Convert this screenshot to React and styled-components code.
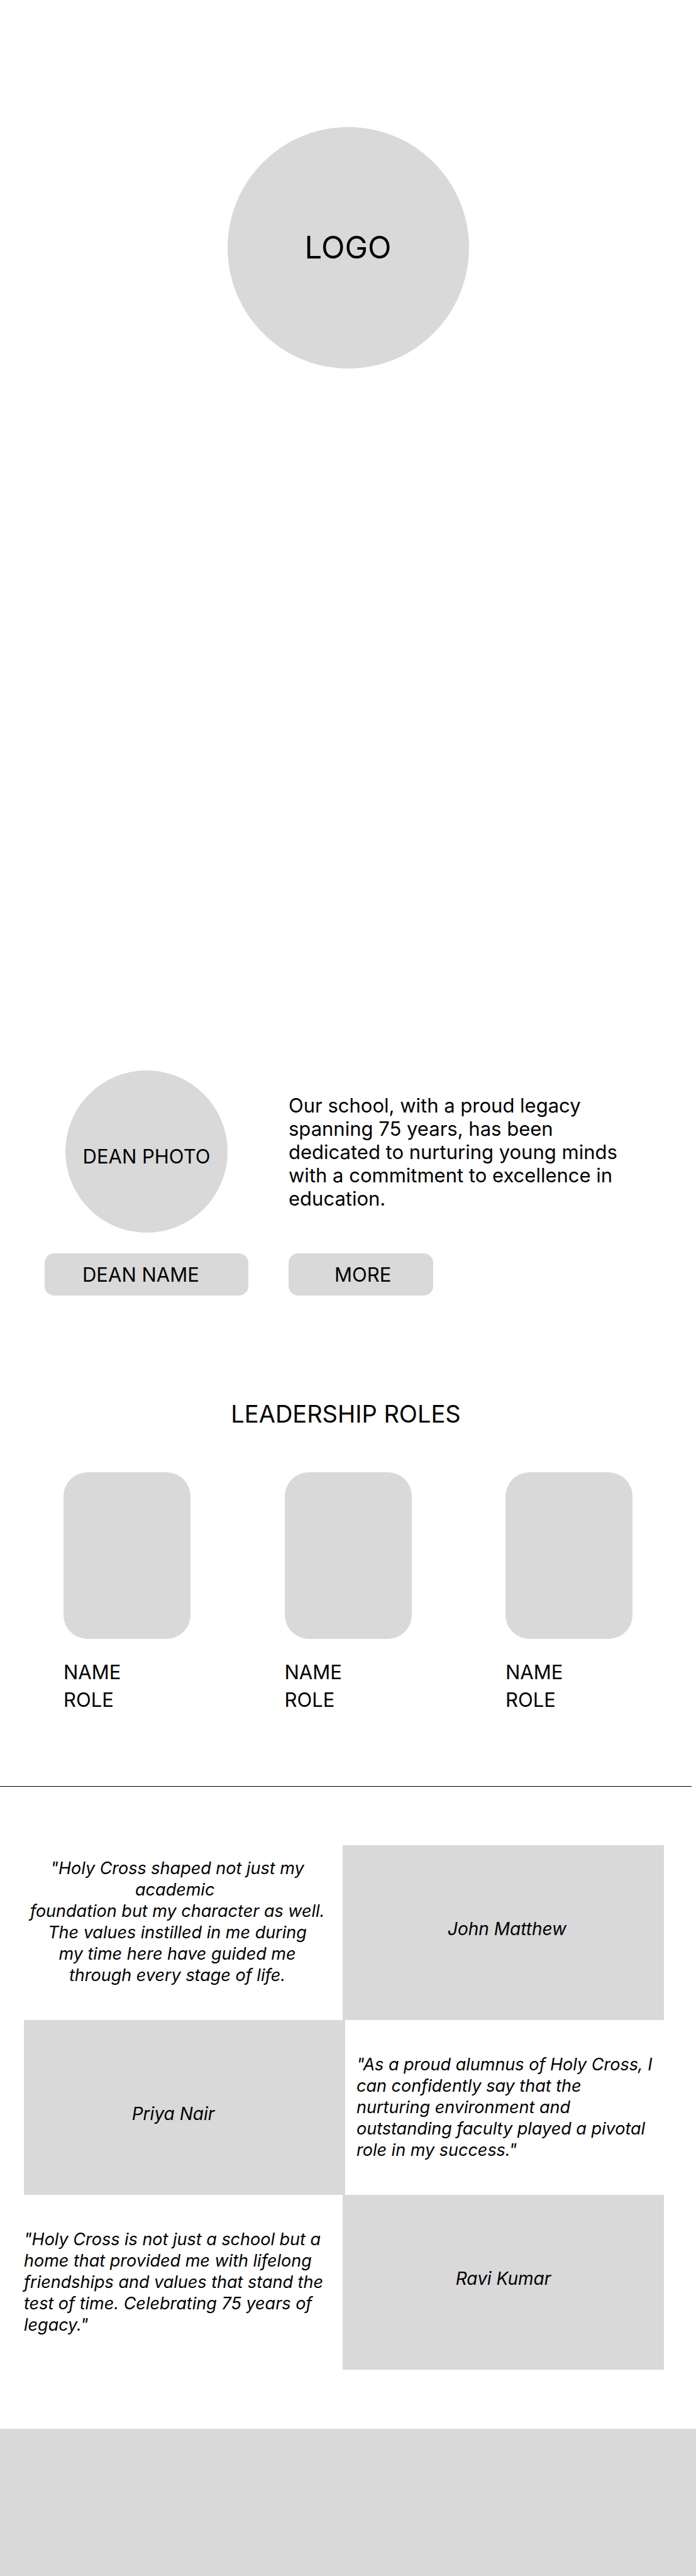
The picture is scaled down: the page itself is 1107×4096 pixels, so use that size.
import React from "react";
import styled, { createGlobalStyle } from "styled-components";

const GlobalStyle = createGlobalStyle`
  *, *::before, *::after { box-sizing: border-box; }
  body {
    margin: 0;
    background: #ffffff;
    color: #000000;
    font-family: Inter, "Liberation Sans", sans-serif;
    font-size: 31px;
    line-height: 37px;
  }
  h1, h2, h3, p, blockquote, figure { margin: 0; font-weight: 400; }
`;

const fill = "#d9d9d9";

const Hero = styled.header`
  display: flex;
  justify-content: center;
  padding: 202px 24px 0;
`;

const Logo = styled.h1`
  display: grid;
  place-items: center;
  width: 384px;
  height: 384px;
  border-radius: 50%;
  background: ${fill};
  font-size: 49px;
  line-height: 60px;
`;

const Dean = styled.section`
  display: grid;
  grid-template-columns: 324px minmax(0, 1fr);
  column-gap: 64px;
  row-gap: 33px;
  align-items: center;
  margin-top: 1116px;
  padding: 0 108px 0 71px;
`;

const DeanPhoto = styled.div`
  display: grid;
  place-items: center;
  justify-self: center;
  width: 258px;
  height: 258px;
  padding-top: 14px;
  border-radius: 50%;
  background: ${fill};
`;

const DeanName = styled.h2`
  padding: 15px 60px;
  border-radius: 15px;
  background: ${fill};
  font-size: 31px;
`;

const MoreButton = styled.button`
  justify-self: start;
  width: 230px;
  padding: 15px 0 15px 73px;
  border: 0;
  border-radius: 15px;
  background: ${fill};
  color: inherit;
  font: inherit;
  text-align: left;
  cursor: pointer;
`;

const Leadership = styled.section`
  margin: 165px 7px 0 0;
  padding-bottom: 115px;
  border-bottom: 1px solid #000000;
`;

const SectionTitle = styled.h2`
  font-size: 38px;
  line-height: 46px;
  text-align: center;
`;

const Leaders = styled.div`
  display: flex;
  justify-content: space-between;
  margin-top: 70px;
  padding: 0 94px 0 101px;
`;

const Leader = styled.article`
  width: 202px;
  line-height: 44px;
`;

const Portrait = styled.div`
  height: 265px;
  margin-bottom: 31px;
  border-radius: 38px;
  background: ${fill};
`;

const LeaderName = styled.h3`
  font-size: 31px;
`;

const Testimonials = styled.section`
  padding: 93px 51px 94px 38px;
  font-size: 28px;
  font-style: italic;
  line-height: 34px;
`;

const Testimonial = styled.figure`
  display: flex;
  flex-direction: ${(p) => (p.$flip ? "row-reverse" : "row")};
  align-items: center;
  min-height: 278px;
`;

const QuoteSide = styled.div`
  flex: 1;
  min-width: 0;
  padding-left: ${(p) => (p.$flip ? "18px" : "0")};
`;

const Quote = styled.blockquote`
  max-width: ${(p) => p.$measure || "none"};
  padding-bottom: ${(p) => (p.$centered ? "34px" : "0")};
  font-size: 27px;
  text-align: ${(p) => (p.$centered ? "center" : "left")};
`;

const NamePanel = styled.figcaption`
  display: grid;
  place-items: center;
  align-self: stretch;
  width: calc(50% + 2px);
  padding: ${(p) => p.$inset};
  background: ${fill};
`;

const Footer = styled.footer`
  height: 234px;
  background: ${fill};
`;

const leaders = [1, 2, 3];

const testimonials = [
  {
    name: "John Matthew",
    inset: "0 0 12px 12px",
    centered: true,
    measure: "488px",
    quote: (
      <>
        "Holy Cross shaped not just my
        <br />
        academic{"\u00a0"}
        <br />
        foundation but my character as well.
        <br />
        The values instilled in me during
        <br />
        my time here have guided me
        <br />
        through every stage of life.
      </>
    ),
  },
  {
    name: "Priya Nair",
    inset: "20px 36px 0 0",
    flip: true,
    measure: "478px",
    quote:
      '"As a proud alumnus of Holy Cross, I can confidently say that the nurturing environment and outstanding faculty played a pivotal role in my success."',
  },
  {
    name: "Ravi Kumar",
    inset: "0 0 12px 0",
    measure: "488px",
    quote:
      '"Holy Cross is not just a school but a home that provided me with lifelong friendships and values that stand the test of time. Celebrating 75 years of legacy."',
  },
];

export default function App() {
  return (
    <>
      <GlobalStyle />
      <Hero>
        <Logo>LOGO</Logo>
      </Hero>
      <main>
        <Dean>
          <DeanPhoto>DEAN PHOTO</DeanPhoto>
          <p>
            Our school, with a proud legacy spanning 75 years, has been
            dedicated to nurturing young minds with a commitment to excellence
            in education.
          </p>
          <DeanName>DEAN NAME</DeanName>
          <MoreButton type="button">MORE</MoreButton>
        </Dean>
        <Leadership>
          <SectionTitle>LEADERSHIP ROLES</SectionTitle>
          <Leaders>
            {leaders.map((id) => (
              <Leader key={id}>
                <Portrait />
                <LeaderName>NAME</LeaderName>
                <p>ROLE</p>
              </Leader>
            ))}
          </Leaders>
        </Leadership>
        <Testimonials>
          {testimonials.map((t) => (
            <Testimonial key={t.name} $flip={t.flip}>
              <QuoteSide $flip={t.flip}>
                <Quote $measure={t.measure} $centered={t.centered}>
                  {t.quote}
                </Quote>
              </QuoteSide>
              <NamePanel $inset={t.inset}>{t.name}</NamePanel>
            </Testimonial>
          ))}
        </Testimonials>
      </main>
      <Footer />
    </>
  );
}
